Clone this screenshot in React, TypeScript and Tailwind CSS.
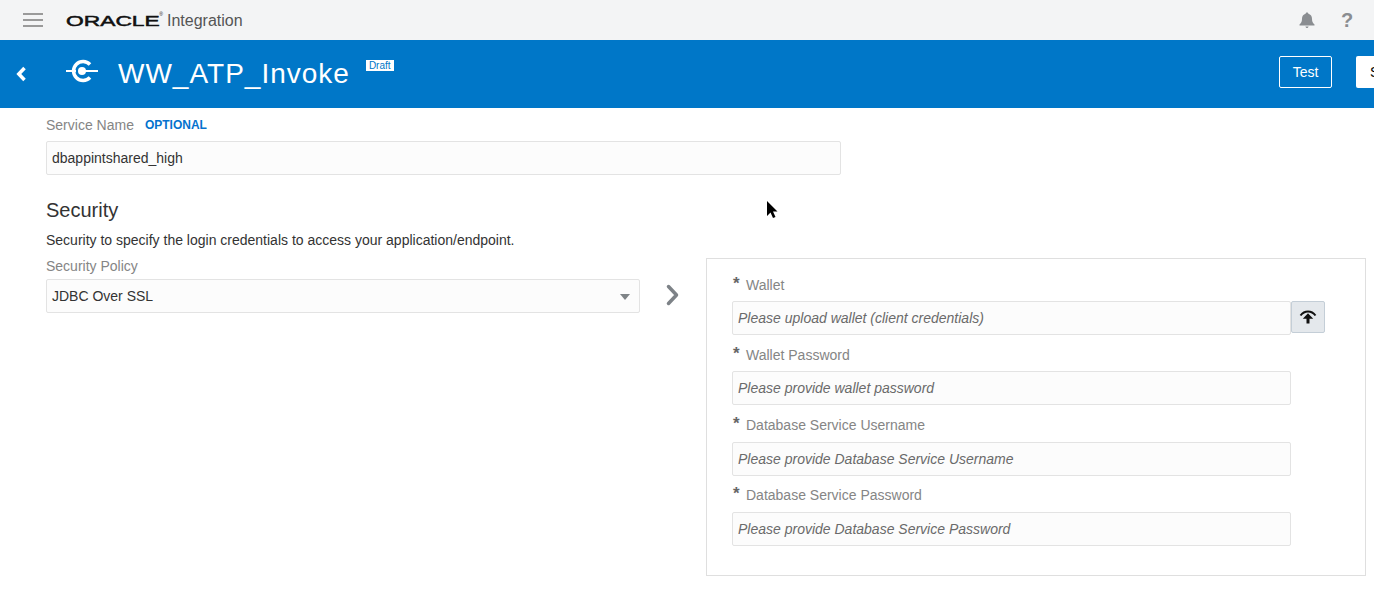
import React from "react";

function Field({ label, placeholder, className = "", inputGap = "mt-[8px]", children }: { label: string; placeholder: string; className?: string; inputGap?: string; children?: React.ReactNode }) {
  return (
    <div className={className}>
      <div className="flex h-[16px] items-center">
        <span className="-mt-[3px] w-[14px] pl-px text-[17px] leading-none font-bold text-[#666]">*</span>
        <span className="text-sm leading-[16px] text-[#858585]">{label}</span>
      </div>
      <div className={`flex items-start ${inputGap}`}>
        <input
          readOnly
          placeholder={placeholder}
          className="h-[34px] w-[559px] rounded-[2px] border border-[#e3e3e3] bg-[#fcfcfc] px-[5px] text-sm italic outline-none placeholder:text-[#6a6a6a] placeholder:opacity-100"
        />
        {children}
      </div>
    </div>
  );
}

export default function App() {
  return (
    <div className="relative h-[611px] w-[1374px] overflow-hidden bg-white font-['Liberation_Sans',Arial,sans-serif] text-[#333]">
      <header className="flex h-[40px] items-center bg-[#f3f4f5] pr-[18px]">
        <div className="ml-[23px] flex w-[20px] flex-col gap-[4px]">
          <span className="h-[2px] bg-[#9a9a9a]" />
          <span className="h-[2px] bg-[#9a9a9a]" />
          <span className="h-[2px] bg-[#9a9a9a]" />
        </div>
        <div className="relative ml-[23px] flex h-[16px] w-[94px] items-center">
          <span className="origin-left scale-x-[1.52] text-[15px] leading-none text-[#111] [-webkit-text-stroke:0.5px_#111]">ORACLE</span>
          <span className="absolute -right-[3px] top-0 text-[5px] leading-none text-[#111]">®</span>
        </div>
        <span className="ml-[7px] mt-px text-base text-[#555]">Integration</span>
        <div className="ml-auto flex items-center gap-[23px]">
          <svg width="16" height="17" viewBox="0 0 16 17" fill="#8a8d91">
            <path d="M8 0.500c.8 0 1.300.5 1.400 1.200C11.700 2.300 13 4.200 13 6.700c0 2.800.6 4.200 2.500 5.800v1H.5v-1C2.400 10.900 3 9.500 3 6.700c0-2.500 1.300-4.400 3.600-5C6.700 1 7.200.5 8 .5z" />
            <path d="M6.400 14.500h3.200c-.2.900-.8 1.500-1.600 1.500s-1.400-.6-1.600-1.500z" />
          </svg>
          <span className="w-[18px] text-center text-[20px] leading-none font-bold text-[#8a8d91]">?</span>
        </div>
      </header>

      <div className="flex h-[68px] items-start bg-[#0077c8] text-white">
        <svg className="ml-[16px] mt-[26px]" width="10" height="16" viewBox="0 0 10 16" fill="none" stroke="white" strokeWidth="3.500">
          <path d="M8.500 2 2.800 8l5.700 6" />
        </svg>
        <svg className="ml-[40px] mt-[19px]" width="32" height="24" viewBox="0 0 32 24" fill="none" stroke="white">
          <path d="M0 12h10" strokeWidth="2" />
          <path d="M16 12h16" strokeWidth="2" />
          <path d="M24 5.500A9.500 9.500 0 1 0 24 18.500" strokeWidth="3.500" />
          <circle cx="16" cy="12" r="4" fill="white" stroke="none" />
        </svg>
        <h1 className="ml-[20px] mt-[16px] text-[28px] leading-[36px] font-normal tracking-[1px]">WW_ATP_Invoke</h1>
        <span className="ml-[16px] mt-[20px] h-[11px] bg-white px-[3px] text-[10px] leading-[11px] text-[#0077c8]">Draft</span>
        <button className="ml-auto mt-[16px] h-[32px] w-[53px] rounded-[2px] border border-white text-sm">Test</button>
        <button className="ml-[24px] mt-[16px] h-[32px] w-[18px] shrink-0 rounded-l-[2px] bg-white pl-[14px] text-left text-sm text-black">
          S
        </button>
      </div>

      <main className="pl-[46px]">
        <div className="flex h-[33px] items-end gap-[11px] pb-[8px]">
          <span className="text-sm leading-[16px] text-[#858585]">Service Name</span>
          <span className="text-xs leading-[16px] font-bold text-[#0572ce]">OPTIONAL</span>
        </div>
        <input
          readOnly
          value="dbappintshared_high"
          className="block h-[34px] w-[795px] rounded-[2px] border border-[#e3e3e3] bg-[#fcfcfc] px-[5px] text-sm text-[#333] outline-none"
        />
        <div className="flex h-[83px] flex-col">
          <h2 className="mt-[23px] text-[20px] leading-[24px] font-normal text-[#333]">Security</h2>
          <p className="mt-[10px] text-sm leading-[16px] text-[#333]">Security to specify the login credentials to access your application/endpoint.</p>
        </div>
        <div className="flex items-start">
          <div className="w-[594px]">
            <div className="text-sm leading-[16px] text-[#858585]">Security Policy</div>
            <div className="mt-[5px] flex h-[34px] items-center justify-between rounded-[2px] border border-[#e3e3e3] bg-[#fcfcfc] pr-[9px] pl-[5px] text-sm">
              <span>JDBC Over SSL</span>
              <span className="mt-px h-0 w-0 border-x-[5px] border-t-[6px] border-x-transparent border-t-[#7f8487]" />
            </div>
          </div>
          <svg className="ml-[26px] mt-[26px]" width="14" height="22" viewBox="0 0 14 22" fill="none" stroke="#7d8287" strokeWidth="3.500" strokeLinecap="round" strokeLinejoin="round">
            <path d="M2.500 2.500l8 8.500-8 8.500" />
          </svg>
          <section className="ml-[26px] h-[318px] w-[660px] border border-[#dfdfdf] px-[25px] pt-[18px]">
            <Field label="Wallet" placeholder="Please upload wallet (client credentials)">
              <button className="flex h-[32px] w-[34px] items-center justify-center rounded-[2px] border border-[#c4ced7] bg-[#e4e8ec]">
                <svg width="18" height="16" viewBox="0 0 18 16" fill="none" stroke="#111" strokeWidth="2">
                  <path d="M1.500 6.500C5.500 1.200 12.500 1.200 16.500 6.500" />
                  <path d="M9 8v6.500" strokeWidth="3" />
                  <path d="M3.800 9.800h10.400L9 4.200z" fill="#111" stroke="none" />
                </svg>
              </button>
            </Field>
            <Field className="mt-[12px]" label="Wallet Password" placeholder="Please provide wallet password" />
            <Field className="mt-[12px]" inputGap="mt-[9px]" label="Database Service Username" placeholder="Please provide Database Service Username" />
            <Field className="mt-[11px]" inputGap="mt-[9px]" label="Database Service Password" placeholder="Please provide Database Service Password" />
          </section>
        </div>
      </main>

      <svg className="absolute left-[767px] top-[201px]" width="11" height="18" viewBox="0 0 11 18" fill="#000">
        <path d="M0 0v15l3.500-3.500L6 17l2.500-1L6 10.500h4.500z" />
      </svg>
    </div>
  );
}
